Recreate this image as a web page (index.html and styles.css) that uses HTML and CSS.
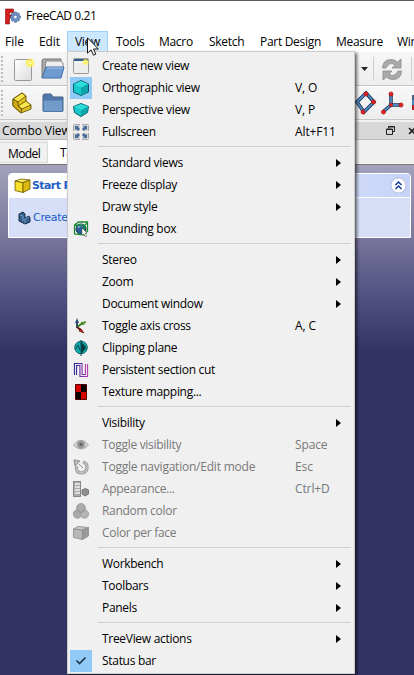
FILE: index.html
```html
<!DOCTYPE html>
<html lang="en">
<head>
<meta charset="utf-8">
<title>FreeCAD 0.21</title>
<link rel="stylesheet" href="styles.css">
</head>
<body>
<div class="window">
  <header class="titlebar">
    <svg class="logo" width="16" height="17" viewBox="0 0 16 17"><path d="M.5 1h8v3.500h-4V7H7v3H4.500v6h-4z" fill="#d51f1f" stroke="#860c0c" stroke-width=".6"/><g fill="#6f97c9" stroke="#294978" stroke-width=".5"><path d="M9.500 4h2l.4 1.600 1.500-.8 1.200 1.300-.8 1.400 1.700.5v2l-1.700.5.8 1.500-1.300 1.300-1.400-.8-.4 1.700h-2L9 12.500l-1.500.8L6.200 12l.8-1.500-1.600-.5V8L7 7.500 6.200 6l1.300-1.200 1.500.8z"/><circle cx="10.400" cy="9" r="1.800" fill="#fff"/></g></svg>
    <span>FreeCAD 0.21</span>
  </header>
  <nav class="menubar">
    <span class="m-file">File</span><span class="m-edit">Edit</span><span class="m-view">View</span><span class="m-tools">Tools</span><span class="m-macro">Macro</span><span class="m-sketch">Sketch</span><span class="m-part">Part Design</span><span class="m-measure">Measure</span><span class="m-win">Windows</span>
  </nav>
  <div class="toolbar first">
    <i class="grip"></i>
    <svg class="t-new" width="24" height="26" viewBox="0 0 24 26"><defs><linearGradient id="paper" x2="1" y2="1"><stop stop-color="#fff"/><stop offset="1" stop-color="#ddd"/></linearGradient><radialGradient id="sun"><stop stop-color="#fffce0"/><stop offset=".4" stop-color="#fff04a"/><stop offset="1" stop-color="#fff04a" stop-opacity="0"/></radialGradient></defs><rect x="1.500" y="3.500" width="17" height="21" rx="1" fill="url(#paper)" stroke="#999"/><circle cx="17" cy="7" r="5.500" fill="url(#sun)"/></svg>
    <svg class="t-open" width="26" height="24" viewBox="0 0 26 24"><path d="M2 21V4q0-2 2-2h17v7" fill="#aaa" stroke="#777"/><path d="M6 4h15l2 2v5H5z" fill="#eee" stroke="#888"/><path d="M6 10h18l-3 11H2z" fill="#6e9cd0" stroke="#416ca7"/><path d="M7 11h16" stroke="#a9c8e8"/></svg>
    <span class="fill"></span>
    <svg class="t-caret" width="7" height="4"><path d="M0 0h7L3.500 4z" fill="#222"/></svg>
    <i class="rule"></i>
    <svg class="t-refresh" width="22" height="23" viewBox="0 0 22 23"><g fill="#aaa" stroke="#8b8b8b" stroke-width=".8"><path d="M1.500 10Q2 1.500 10 1.500q4 0 6.500 2.500L20 1v9h-9l3-3q-5-4-9 3z"/><path d="M20.500 13Q20 21.500 12 21.500q-4 0-6.500-2.500L2 22v-9h9l-3 3q5 4 9-3z"/></g></svg>
    <i class="rule end"></i>
  </div>
  <div class="toolbar second">
    <i class="grip"></i>
    <svg class="t-body" width="20" height="22" viewBox="0 0 20 22"><g stroke="#635300" stroke-width=".9" stroke-linejoin="round"><path d="M1 7l9-6 4 3v6l5 3v4l-10 4-8-7z" fill="#e3c222"/><path d="M1 7l9-6 4 3-8 6zM6 14l8-5 5 4-9 4z" fill="#fbe64e"/><path d="M1 7v7l8 7 1-4-4-3v-4z" fill="#cfaa14"/></g></svg>
    <svg class="t-folder" width="22" height="20" viewBox="0 0 22 20"><path d="M1 18V3q0-2 2-2h6l2 3h10v14z" fill="#5279ab" stroke="#405c83"/><path d="M1.500 7h19v11.500h-19z" fill="#729bca" stroke="#4f77aa"/></svg>
    <span class="fill"></span>
    <svg class="t-sketch" width="24" height="24" viewBox="0 0 24 24"><path d="M4 11l9-9 8 9-10 10z" fill="none" stroke="#183253" stroke-width="3.500"/><path d="M4 11l9-9 8 9-10 10z" fill="none" stroke="#548bc6" stroke-width="1.800"/><g fill="#eb2020" stroke="#941414" stroke-width=".6"><circle cx="13" cy="3" r="2.100"/><circle cx="20.500" cy="11" r="2.100"/><circle cx="10" cy="21" r="2.100"/></g></svg>
    <svg class="t-axis" width="24" height="24" viewBox="0 0 24 24"><path d="M11 3v11h10M11 14l-7 6" fill="none" stroke="#183253" stroke-width="3.500"/><path d="M11 3v11h10M11 14l-7 6" fill="none" stroke="#548bc6" stroke-width="1.800"/><g fill="#eb2020" stroke="#941414" stroke-width=".6"><circle cx="11" cy="3" r="2.100"/><circle cx="21" cy="14" r="2.100"/><circle cx="3.500" cy="21" r="2.100"/><circle cx="11" cy="14" r="1.700"/></g></svg>
    <svg class="t-edge" width="2" height="20"><rect y="2" width="2" height="5" fill="#456078"/><rect y="7" width="2" height="5" fill="#4388c2"/><rect y="12" width="2" height="5" fill="#b22"/></svg>
  </div>
  <div class="dock-title"><span>Combo View</span>
    <svg class="float" width="9" height="9" viewBox="0 0 9 9"><path d="M2.500 2.500v-2h6v5h-2M.5 3h6v5.500h-6z" fill="none" stroke="#222"/><path d="M2 1h7M0 3.500h7" stroke="#222"/></svg>
    <svg class="close" width="8" height="8" viewBox="0 0 8 8"><path d="M1 1l6 6M7 1L1 7" stroke="#222" stroke-width="1.700"/></svg>
  </div>
  <div class="tabs"><span class="model">Model</span><span class="tasks">Tasks</span></div>
  <main class="task-area">
    <section class="panel">
      <div class="panel-head">
        <svg width="17" height="15" viewBox="0 0 17 15"><g stroke="#695800" stroke-width=".8"><path d="M1 3l8 1.500v10l-8-2z" fill="#f6de2c"/><path d="M1 3l6-2 9 1-7 2.500z" fill="#fff267"/><path d="M9 4.500l7-2.500v9l-7 3.500z" fill="#d9b912"/></g></svg>
        <b>Start Part</b>
        <svg class="collapse" width="17" height="17" viewBox="0 0 17 17"><circle cx="8.500" cy="8.500" r="7.500" fill="#fff" stroke="#b7bed9"/><path d="M5.500 8l3-3 3 3M5.500 12l3-3 3 3" fill="none" stroke="#123e9d" stroke-width="1.500"/></svg>
      </div>
      <div class="panel-body">
        <svg width="13" height="14" viewBox="0 0 13 14"><path d="M1 3l4-2 2 2v4l4-2 1 2v4l-5 2-6-3z" fill="#355f8c" stroke="#17314f"/><path d="M2 4l3 1v5M7 8l4-2M7 8v4" stroke="#6c9ac5" fill="none"/></svg>
        <span>Create Body</span>
      </div>
    </section>
  </main>
</div>

<div class="menu">
  <div class="item"><i class="ico"><svg width="16" height="16" viewBox="0 0 16 16"><rect x=".5" y=".5" width="15" height="15" rx="1" fill="#ededeb" stroke="#999"/><path d="M1 1h14v2H1z" fill="#315b93"/><path d="M2 4h12v1H2z" fill="#fff"/><circle cx="12.500" cy="4" r="3.800" fill="url(#sun)"/></svg></i><span>Create new view</span></div>
  <div class="item"><i class="ico on"><svg width="16" height="16" viewBox="0 0 16 16"><path d="M8 .5l7.500 3.500v8L8 15.500.5 12V4z" fill="#19c8cb" stroke="#075f69"/><path d="M8 8l7-4v8l-7 3.500z" fill="#0ca5aa"/><path d="M1 4l7-3 7 3-7 3.500z" fill="#2fdcdc"/></svg></i><span>Orthographic view</span><kbd>V, O</kbd></div>
  <div class="item"><i class="ico"><svg width="16" height="16" viewBox="0 0 16 16"><path d="M8 1.500l7.500 3-1 6L8 14.500l-6.500-4-1-6z" fill="#19c8cb" stroke="#075f69"/><path d="M8 8l7-3.500-1 6-6 3.500z" fill="#0ca5aa"/><path d="M1 4.500L8 2l7 2.500L8 8z" fill="#2fdcdc"/></svg></i><span>Perspective view</span><kbd>V, P</kbd></div>
  <div class="item"><i class="ico"><svg width="16" height="16" viewBox="0 0 16 16"><rect x=".5" y=".5" width="15" height="15" rx="1" fill="#d5d7d4" stroke="#a3a5a3"/><path d="M8 0v16M0 8h16" stroke="#eee" stroke-width="2"/><path d="M2 2h4L5 3l2 2-2 2-2-2-1 1zM14 2h-4l1 1-2 2 2 2 2-2 1 1zM2 14h4l-1-1 2-2-2-2-2 2-1-1zM14 14h-4l1-1-2-2 2-2 2 2 1-1z" fill="#46699a"/></svg></i><span>Fullscreen</span><kbd>Alt+F11</kbd></div>
  <hr>
  <div class="item sub"><i class="ico"></i><span>Standard views</span></div>
  <div class="item sub"><i class="ico"></i><span>Freeze display</span></div>
  <div class="item sub"><i class="ico"></i><span>Draw style</span></div>
  <div class="item"><i class="ico"><svg width="16" height="16" viewBox="0 0 16 16"><circle cx="8" cy="8" r="5" fill="#285b91" stroke="#10345c"/><path d="M5 7q2-4 5-2" stroke="#76a6d3" stroke-width="2" fill="none"/><path d="M1.500 4l4-3h9v9l-3 4-10-1zM1.500 4l10 .5v10M11.500 4.500l3-3" stroke="#168b30" stroke-width="1.300" fill="none"/><path d="M9 7l5 5-2 .2 2 3-1.500.8-1.500-3L9 14z" fill="#fff" stroke="#555" stroke-width=".5"/></svg></i><span>Bounding box</span></div>
  <hr>
  <div class="item sub"><i class="ico"></i><span>Stereo</span></div>
  <div class="item sub"><i class="ico"></i><span>Zoom</span></div>
  <div class="item sub"><i class="ico"></i><span>Document window</span></div>
  <div class="item"><i class="ico"><svg width="16" height="16" viewBox="0 0 16 16"><path d="M4 10V3" stroke="#2c4e72" stroke-width="2"/><path d="M4 0l2 5H2z" fill="#2c4e72"/><path d="M4 9l6-4" stroke="#327b1c" stroke-width="1.700"/><path d="M13 3.500L10.500 7 8 4.500z" fill="#64a829" stroke="#245f12" stroke-width=".5"/><path d="M4 9l5 4" stroke="#6b1919" stroke-width="1.800"/><path d="M7.500 10.500L11 15l-5-2z" fill="#bd2222" stroke="#651010" stroke-width=".7"/></svg></i><span>Toggle axis cross</span><kbd>A, C</kbd></div>
  <div class="item"><i class="ico"><svg width="16" height="16" viewBox="0 0 16 16"><circle cx="8" cy="7.500" r="6.300" fill="#10a9ab" stroke="#116569"/><path d="M8 1.500l5 5.500v1l-5 6z" fill="#063d42"/><path d="M8 0v16M3 9l2-4 2 5" fill="none" stroke="#044c55"/></svg></i><span>Clipping plane</span></div>
  <div class="item"><i class="ico"><svg width="16" height="16" viewBox="0 0 16 16"><defs><linearGradient id="section" x2="1" y2="0"><stop stop-color="#252a91"/><stop offset=".6" stop-color="#7c2ca6"/><stop offset="1" stop-color="#b438b0"/></linearGradient></defs><path d="M2.500 13V2.500h5.500v11h5.500V2.010" fill="none" stroke="url(#section)" stroke-width="3.200"/><path d="M2.500 13V2.500h5.500v11h5.500V2" fill="none" stroke="#ece6f3" stroke-width="1.100"/></svg></i><span>Persistent section cut</span></div>
  <div class="item"><i class="ico"><svg width="16" height="16" viewBox="0 0 16 16"><path d="M2.500.5h11v15h-11z" fill="#d90000" stroke="#520000"/><path d="M8 1h5v7H8zM3 8h5v7H3z" fill="#090000"/></svg></i><span>Texture mapping...</span></div>
  <hr>
  <div class="item sub"><i class="ico"></i><span>Visibility</span></div>
  <div class="item off"><i class="ico"><svg width="16" height="16" viewBox="0 0 16 16"><path d="M.5 8Q8-1.500 15.500 8 8 16 .5 8z" fill="#d6d6d6" stroke="#a7a7a7"/><circle cx="8" cy="7.500" r="4" fill="#9c9c9c"/><circle cx="8" cy="7.500" r="1.800" fill="#666"/></svg></i><span>Toggle visibility</span><kbd>Space</kbd></div>
  <div class="item off"><i class="ico"><svg width="16" height="16" viewBox="0 0 16 16"><path d="M3.500 7q-1 7 5 7 5.500-.5 5.500-6 0-4-4-5" fill="none" stroke="#919191" stroke-width="3.200"/><path d="M3.500 7q-1 7 5 7 5.500-.5 5.500-6 0-4-4-5" fill="none" stroke="#c0c0c0" stroke-width="1.800"/><path d="M1 .800l6 1.400-5 4.800zM6 5l4 4" fill="#bbb" stroke="#909090"/></svg></i><span class="long">Toggle navigation/Edit mode</span><kbd>Esc</kbd></div>
  <div class="item off"><i class="ico"><svg width="16" height="16" viewBox="0 0 16 16"><rect x=".5" y=".5" width="7" height="15" fill="#aaa" stroke="#888"/><path d="M2 3h5M2 6h5M2 9h5M2 12h5" stroke="#eee" stroke-width="1.300"/><path d="M9 9l3.500-1.500L15.500 9v4L12 15l-3-2z" fill="#8f8f8f" stroke="#777"/></svg></i><span>Appearance...</span><kbd>Ctrl+D</kbd></div>
  <div class="item off"><i class="ico"><svg width="16" height="16" viewBox="0 0 16 16"><g stroke="#929292" stroke-width=".7"><circle cx="4.500" cy="11" r="4.200" fill="#aaa"/><circle cx="11.500" cy="11" r="4.200" fill="#b5b5b5"/><circle cx="8" cy="5" r="4.500" fill="#a0a0a0" fill-opacity=".85"/></g></svg></i><span>Random color</span></div>
  <div class="item off"><i class="ico"><svg width="16" height="16" viewBox="0 0 16 16"><g stroke="#8c8c8c" stroke-width=".8"><path d="M.5 4l9 1v9.500l-9-2z" fill="#b7b7b7"/><path d="M.5 4L5 1.500l10.500 1-6 2.500z" fill="#c6c6c6"/><path d="M9.500 5l6-2.500V11l-6 3.500z" fill="#999"/></g></svg></i><span>Color per face</span></div>
  <hr>
  <div class="item sub"><i class="ico"></i><span>Workbench</span></div>
  <div class="item sub"><i class="ico"></i><span>Toolbars</span></div>
  <div class="item sub"><i class="ico"></i><span>Panels</span></div>
  <hr>
  <div class="item sub"><i class="ico"></i><span>TreeView actions</span></div>
  <div class="item"><i class="ico on"><svg width="12" height="10" viewBox="0 0 12 10"><path d="M1.500 4.500L4.500 7.500 10.500 1.500" fill="none" stroke="#243646" stroke-width="1.600"/></svg></i><span>Status bar</span></div>
</div>
<svg class="cursor" width="12" height="19" viewBox="0 0 12 19"><path d="M.5.8v15.400l3.600-3.400 2.400 5.400 2.300-1-2.300-5.200h4.800z" fill="#fff" stroke="#161616"/></svg>
</body>
</html>
```

FILE: styles.css
```css
* { box-sizing: border-box; }
body { margin: 0; width: 414px; height: 675px; overflow: hidden; position: relative; background: #336; color: #000; font: 12px/22px "Open Sans", "Noto Sans", sans-serif; letter-spacing: -.3px; }
svg { display: block; flex: none; }
span, b, kbd { white-space: nowrap; }
.window { width: 414px; height: 675px; display: flex; flex-direction: column; overflow: hidden; }
.titlebar { height: 31px; flex: none; display: flex; align-items: center; border-top: 1px solid #5c5a60; background: #fff; padding-left: 5px; gap: 5px; letter-spacing: -.4px; }
.menubar { height: 21px; flex: none; background: #fff; display: flex; line-height: 22px; }
.menubar span { flex: none; padding-left: 5px; }
.m-file { width: 34px; letter-spacing: 0; }
.m-edit { width: 33px; letter-spacing: -.1px; }
.menubar .m-view { width: 41px; padding-left: 7px; background: #cce8ff; border: 1px solid #99d1ff; line-height: 20px; }
.menubar .m-tools { width: 46px; padding-left: 8px; }
.m-macro { width: 50px; }
.m-sketch { width: 51px; }
.m-part { width: 76px; }
.m-measure { width: 61px; }
.toolbar { flex: none; display: flex; align-items: center; background: linear-gradient(#f7f7f7, #ededed); border-bottom: 1px solid #c5c5c5; }
.first { height: 34px; padding-top: 1px; }
.second { height: 34px; border-top: 1px solid #fff; }
.fill { flex: 1; }
.grip { width: 2px; height: 26px; background: repeating-linear-gradient(#bbb 0 2px, #f6f6f6 2px 4px); margin-left: 1px; }
.t-new { margin-left: 10px; }
.t-open { margin-left: 3px; }
.t-caret { margin-right: 5px; }
.rule { width: 1px; height: 24px; background: #cfcfcf; }
.t-refresh { margin: 0 8px 0 7px; }
.end { margin-right: 2px; }
.t-body { margin-left: 9px; }
.t-folder { margin-left: 10px; }
.t-sketch { margin-right: -1px; }
.t-axis { margin: 0 8px 0 4px; }
.dock-title { height: 20px; flex: none; background: #d8d8d8; border-top: 2px solid #f0f0f0; border-bottom: 1px solid #bbb; display: flex; align-items: center; padding: 0 0 0 2px; letter-spacing: -.12px; }
.float { margin-left: auto; }
.close { margin: 0 -2px 0 13px; }
.tabs { height: 24px; flex: none; background: #f0f0f0; display: flex; border-bottom: 1px solid #f8f8f8; line-height: 21px; }
.model { width: 48px; margin-top: 2px; height: 21px; padding-left: 8px; border: 1px solid #d9d9d9; border-left: 0; letter-spacing: -.6px; }
.tasks { width: 60px; background: #fff; padding: 2px 0 0 12px; }
.task-area { flex: 1; border-top: 1px solid #777; padding: 8px 3px 0 8px; background: linear-gradient(#a3a2bb 0, #7e7b9e 65px, #555585 125px, #336 185px, #336 100%); }
.panel { height: 65px; border: 1px solid #fff; border-radius: 4px 4px 0 0; background: #d6dff7; color: #215dc6; overflow: hidden; font-family: "DejaVu Sans", sans-serif; font-size: 11px; }
.panel-head { height: 24px; display: flex; align-items: center; gap: 1px; padding: 0 3px 0 5px; background: linear-gradient(90deg, #fff 15%, #c6d3f7); border-bottom: 1px solid #fff; }
.panel-head b { letter-spacing: -.6px; }
.collapse { margin-left: auto; }
.panel-body { display: flex; align-items: center; gap: 2px; padding: 9px 0 0 9px; }
.menu { position: absolute; left: 67px; top: 51px; width: 288px; height: 623px; background: #f0f0f0; border: 1px solid #ccc; padding: 3px 2px 0; box-shadow: 2px 2px 3px rgba(0,0,0,.6); }
.item { height: 22px; display: grid; grid-template-columns: 22px 183px 1fr; column-gap: 10px; align-items: center; position: relative; }
.item span { line-height: 22px; }
.item .long { letter-spacing: -.22px; }
.ico { width: 22px; height: 22px; display: flex; align-items: center; justify-content: center; }
.on { background: #91c9f7; }
kbd { font: inherit; letter-spacing: -.12px; }
.sub::after { content: ""; width: 0; height: 0; border: 4px solid transparent; border-left: 5px solid #000; border-right: 0; justify-self: end; margin-right: 11px; grid-column: 3; }
.off { color: #787878; }
hr { height: 1px; border: 0; margin: 3px 1px 5px 28px; background: #d0d0d0; }
.cursor { position: absolute; left: 87px; top: 37px; }
```
